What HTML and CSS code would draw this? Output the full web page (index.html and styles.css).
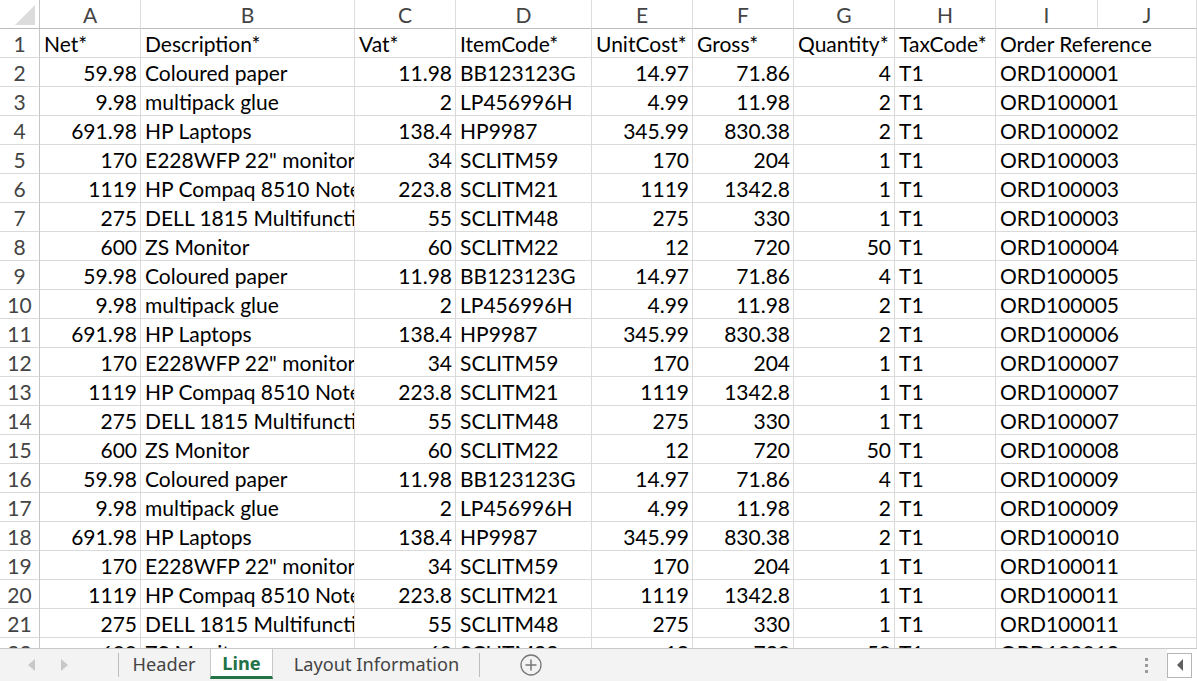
FILE: index.html
```html
<!DOCTYPE html>
<html>
<head>
<meta charset="utf-8">
<link rel="stylesheet" href="styles.css">
</head>
<body>
<div class="sheet">
  <div class="grid">
    <div class="c corner"><span class="tri"></span></div>
    <div class="c ch">A</div><div class="c ch">B</div><div class="c ch">C</div><div class="c ch">D</div><div class="c ch">E</div><div class="c ch">F</div><div class="c ch">G</div><div class="c ch">H</div><div class="c ch">I</div><div class="c ch chj">J</div>

    <div class="c rh">1</div><div class="c">Net*</div><div class="c">Description*</div><div class="c">Vat*</div><div class="c">ItemCode*</div><div class="c">UnitCost*</div><div class="c">Gross*</div><div class="c">Quantity*</div><div class="c">TaxCode*</div><div class="c ov">Order Reference</div><div class="c j"></div>

    <div class="c rh">2</div><div class="c n">59.98</div><div class="c">Coloured paper</div><div class="c n">11.98</div><div class="c">BB123123G</div><div class="c n">14.97</div><div class="c n">71.86</div><div class="c n">4</div><div class="c">T1</div><div class="c ov">ORD100001</div><div class="c j"></div>
    <div class="c rh">3</div><div class="c n">9.98</div><div class="c">multipack glue</div><div class="c n">2</div><div class="c">LP456996H</div><div class="c n">4.99</div><div class="c n">11.98</div><div class="c n">2</div><div class="c">T1</div><div class="c ov">ORD100001</div><div class="c j"></div>
    <div class="c rh">4</div><div class="c n">691.98</div><div class="c">HP Laptops</div><div class="c n">138.4</div><div class="c">HP9987</div><div class="c n">345.99</div><div class="c n">830.38</div><div class="c n">2</div><div class="c">T1</div><div class="c ov">ORD100002</div><div class="c j"></div>
    <div class="c rh">5</div><div class="c n">170</div><div class="c">E228WFP 22" monitor</div><div class="c n">34</div><div class="c">SCLITM59</div><div class="c n">170</div><div class="c n">204</div><div class="c n">1</div><div class="c">T1</div><div class="c ov">ORD100003</div><div class="c j"></div>
    <div class="c rh">6</div><div class="c n">1119</div><div class="c">HP Compaq 8510 Notebook</div><div class="c n">223.8</div><div class="c">SCLITM21</div><div class="c n">1119</div><div class="c n">1342.8</div><div class="c n">1</div><div class="c">T1</div><div class="c ov">ORD100003</div><div class="c j"></div>
    <div class="c rh">7</div><div class="c n">275</div><div class="c">DELL 1815 Multifunction Printer</div><div class="c n">55</div><div class="c">SCLITM48</div><div class="c n">275</div><div class="c n">330</div><div class="c n">1</div><div class="c">T1</div><div class="c ov">ORD100003</div><div class="c j"></div>
    <div class="c rh">8</div><div class="c n">600</div><div class="c">ZS Monitor</div><div class="c n">60</div><div class="c">SCLITM22</div><div class="c n">12</div><div class="c n">720</div><div class="c n">50</div><div class="c">T1</div><div class="c ov">ORD100004</div><div class="c j"></div>
    <div class="c rh">9</div><div class="c n">59.98</div><div class="c">Coloured paper</div><div class="c n">11.98</div><div class="c">BB123123G</div><div class="c n">14.97</div><div class="c n">71.86</div><div class="c n">4</div><div class="c">T1</div><div class="c ov">ORD100005</div><div class="c j"></div>
    <div class="c rh">10</div><div class="c n">9.98</div><div class="c">multipack glue</div><div class="c n">2</div><div class="c">LP456996H</div><div class="c n">4.99</div><div class="c n">11.98</div><div class="c n">2</div><div class="c">T1</div><div class="c ov">ORD100005</div><div class="c j"></div>
    <div class="c rh">11</div><div class="c n">691.98</div><div class="c">HP Laptops</div><div class="c n">138.4</div><div class="c">HP9987</div><div class="c n">345.99</div><div class="c n">830.38</div><div class="c n">2</div><div class="c">T1</div><div class="c ov">ORD100006</div><div class="c j"></div>
    <div class="c rh">12</div><div class="c n">170</div><div class="c">E228WFP 22" monitor</div><div class="c n">34</div><div class="c">SCLITM59</div><div class="c n">170</div><div class="c n">204</div><div class="c n">1</div><div class="c">T1</div><div class="c ov">ORD100007</div><div class="c j"></div>
    <div class="c rh">13</div><div class="c n">1119</div><div class="c">HP Compaq 8510 Notebook</div><div class="c n">223.8</div><div class="c">SCLITM21</div><div class="c n">1119</div><div class="c n">1342.8</div><div class="c n">1</div><div class="c">T1</div><div class="c ov">ORD100007</div><div class="c j"></div>
    <div class="c rh">14</div><div class="c n">275</div><div class="c">DELL 1815 Multifunction Printer</div><div class="c n">55</div><div class="c">SCLITM48</div><div class="c n">275</div><div class="c n">330</div><div class="c n">1</div><div class="c">T1</div><div class="c ov">ORD100007</div><div class="c j"></div>
    <div class="c rh">15</div><div class="c n">600</div><div class="c">ZS Monitor</div><div class="c n">60</div><div class="c">SCLITM22</div><div class="c n">12</div><div class="c n">720</div><div class="c n">50</div><div class="c">T1</div><div class="c ov">ORD100008</div><div class="c j"></div>
    <div class="c rh">16</div><div class="c n">59.98</div><div class="c">Coloured paper</div><div class="c n">11.98</div><div class="c">BB123123G</div><div class="c n">14.97</div><div class="c n">71.86</div><div class="c n">4</div><div class="c">T1</div><div class="c ov">ORD100009</div><div class="c j"></div>
    <div class="c rh">17</div><div class="c n">9.98</div><div class="c">multipack glue</div><div class="c n">2</div><div class="c">LP456996H</div><div class="c n">4.99</div><div class="c n">11.98</div><div class="c n">2</div><div class="c">T1</div><div class="c ov">ORD100009</div><div class="c j"></div>
    <div class="c rh">18</div><div class="c n">691.98</div><div class="c">HP Laptops</div><div class="c n">138.4</div><div class="c">HP9987</div><div class="c n">345.99</div><div class="c n">830.38</div><div class="c n">2</div><div class="c">T1</div><div class="c ov">ORD100010</div><div class="c j"></div>
    <div class="c rh">19</div><div class="c n">170</div><div class="c">E228WFP 22" monitor</div><div class="c n">34</div><div class="c">SCLITM59</div><div class="c n">170</div><div class="c n">204</div><div class="c n">1</div><div class="c">T1</div><div class="c ov">ORD100011</div><div class="c j"></div>
    <div class="c rh">20</div><div class="c n">1119</div><div class="c">HP Compaq 8510 Notebook</div><div class="c n">223.8</div><div class="c">SCLITM21</div><div class="c n">1119</div><div class="c n">1342.8</div><div class="c n">1</div><div class="c">T1</div><div class="c ov">ORD100011</div><div class="c j"></div>
    <div class="c rh">21</div><div class="c n">275</div><div class="c">DELL 1815 Multifunction Printer</div><div class="c n">55</div><div class="c">SCLITM48</div><div class="c n">275</div><div class="c n">330</div><div class="c n">1</div><div class="c">T1</div><div class="c ov">ORD100011</div><div class="c j"></div>
    <div class="c rh">22</div><div class="c n">600</div><div class="c">ZS Monitor</div><div class="c n">60</div><div class="c">SCLITM22</div><div class="c n">12</div><div class="c n">720</div><div class="c n">50</div><div class="c">T1</div><div class="c ov">ORD100012</div><div class="c j"></div>
  </div>
</div>
<div class="tabbar">
  <div class="nav">
    <span class="arr arr-l"></span>
    <span class="arr arr-r"></span>
  </div>
  <div class="tabs">
    <div class="tab t-header">Header</div>
    <div class="tab active">Line</div>
    <div class="tab last">Layout Information</div>
    <div class="add">
      <svg width="22" height="22" viewBox="0 0 22 22"><circle cx="11" cy="11" r="10" fill="none" stroke="#777" stroke-width="1.3"/><path d="M11 5.5v11M5.5 11h11" stroke="#777" stroke-width="1.5"/></svg>
    </div>
  </div>
  <div class="spacer"></div>
  <div class="dots"><span></span><span></span><span></span></div>
  <div class="hscroll">
    <div class="sbtn"><span class="sarr"></span></div>
  </div>
</div>
</body>
</html>
```

FILE: styles.css
```css
html, body {
  margin: 0;
  padding: 0;
  background: #fff;
  overflow: hidden;
}
body {
  width: 1197px;
  height: 681px;
  font-family: Lato, "Liberation Sans", sans-serif;
}
.sheet {
  height: 648px;
  overflow: hidden;
}
.grid {
  display: grid;
  grid-template-columns: 40px 101px 214px 101px 136px 101px 101px 101px 101px 102px 99px;
  grid-auto-rows: 29px;
}
.c {
  box-sizing: border-box;
  border-right: 1px solid #dadada;
  border-bottom: 1px solid #dadada;
  padding: 0 3px 0 4px;
  font-size: 21px;
  line-height: 29px;
  color: #000;
  white-space: nowrap;
  overflow: hidden;
  background: #fff;
}
.n { text-align: right; }
.ov { overflow: visible; border-right: none; position: relative; z-index: 1; background: transparent; }
.j { background: transparent; }
.rh {
  text-align: center;
  color: #444;
  padding: 0;
  border-right-color: #c6c6c6;
}
.ch {
  text-align: center;
  color: #444;
  padding: 0;
  border-bottom-color: #bdbdbd;
  border-right-color: #dedede;
}
.corner {
  position: relative;
  padding: 0;
  border-bottom-color: #bdbdbd;
  border-right-color: #c6c6c6;
}
.tri {
  position: absolute;
  right: 4px;
  bottom: 3px;
  width: 0;
  height: 0;
  border-left: 20px solid transparent;
  border-bottom: 20px solid #dcdcdc;
}
.tabbar {
  box-sizing: border-box;
  height: 33px;
  border-top: 1px solid #c8c8c8;
  background: #f3f3f3;
  display: flex;
  align-items: stretch;
  font-family: "Noto Sans", "Open Sans", sans-serif;
  font-size: 18.2px;
  color: #444;
}
.nav {
  width: 118px;
  display: flex;
  align-items: center;
  padding-left: 28px;
  gap: 26px;
  box-sizing: border-box;
}
.arr {
  width: 0;
  height: 0;
  border-top: 6px solid transparent;
  border-bottom: 6px solid transparent;
}
.arr-l { border-right: 7px solid #c8c8c8; }
.arr-r { border-left: 7px solid #c8c8c8; }
.tabs {
  display: flex;
  align-items: stretch;
}
.tab {
  box-sizing: border-box;
  display: flex;
  align-items: center;
  justify-content: center;
  padding-bottom: 2px;
  position: relative;
}
.t-header { width: 92px; }
.tab::before {
  content: "";
  position: absolute;
  left: 0;
  top: 4px;
  bottom: 4px;
  width: 1px;
  background: #bdbdbd;
}
.tab.last {
  width: 207px;
}
.tab.last::after {
  content: "";
  position: absolute;
  right: 0;
  top: 4px;
  bottom: 4px;
  width: 1px;
  background: #bdbdbd;
}
.tab.active {
  width: 63px;
  background: #fff;
  color: #217346;
  font-weight: bold;
  border-left: 1px solid #c8c8c8;
  border-right: 1px solid #c8c8c8;
  border-bottom: 3px solid #217346;
  height: 30px;
  padding-bottom: 0;
}
.tab.active::before { display: none; }
.tab.active + .tab::before { display: none; }
.add {
  display: flex;
  align-items: center;
  margin-left: 40px;
}
.spacer { flex: 1; }
.dots {
  width: 6px;
  display: flex;
  flex-direction: column;
  justify-content: center;
  gap: 3px;
  margin-right: 16px;
}
.dots span {
  width: 3px;
  height: 3px;
  background: #9a9a9a;
}
.hscroll {
  width: 30px;
  background: #fff;
  display: flex;
  align-items: center;
}
.sbtn {
  box-sizing: border-box;
  width: 25px;
  height: 25px;
  border: 1px solid #b5b5b5;
  display: flex;
  align-items: center;
  justify-content: center;
}
.sarr {
  width: 0;
  height: 0;
  border-top: 6px solid transparent;
  border-bottom: 6px solid transparent;
  border-right: 6px solid #606060;
}
```
